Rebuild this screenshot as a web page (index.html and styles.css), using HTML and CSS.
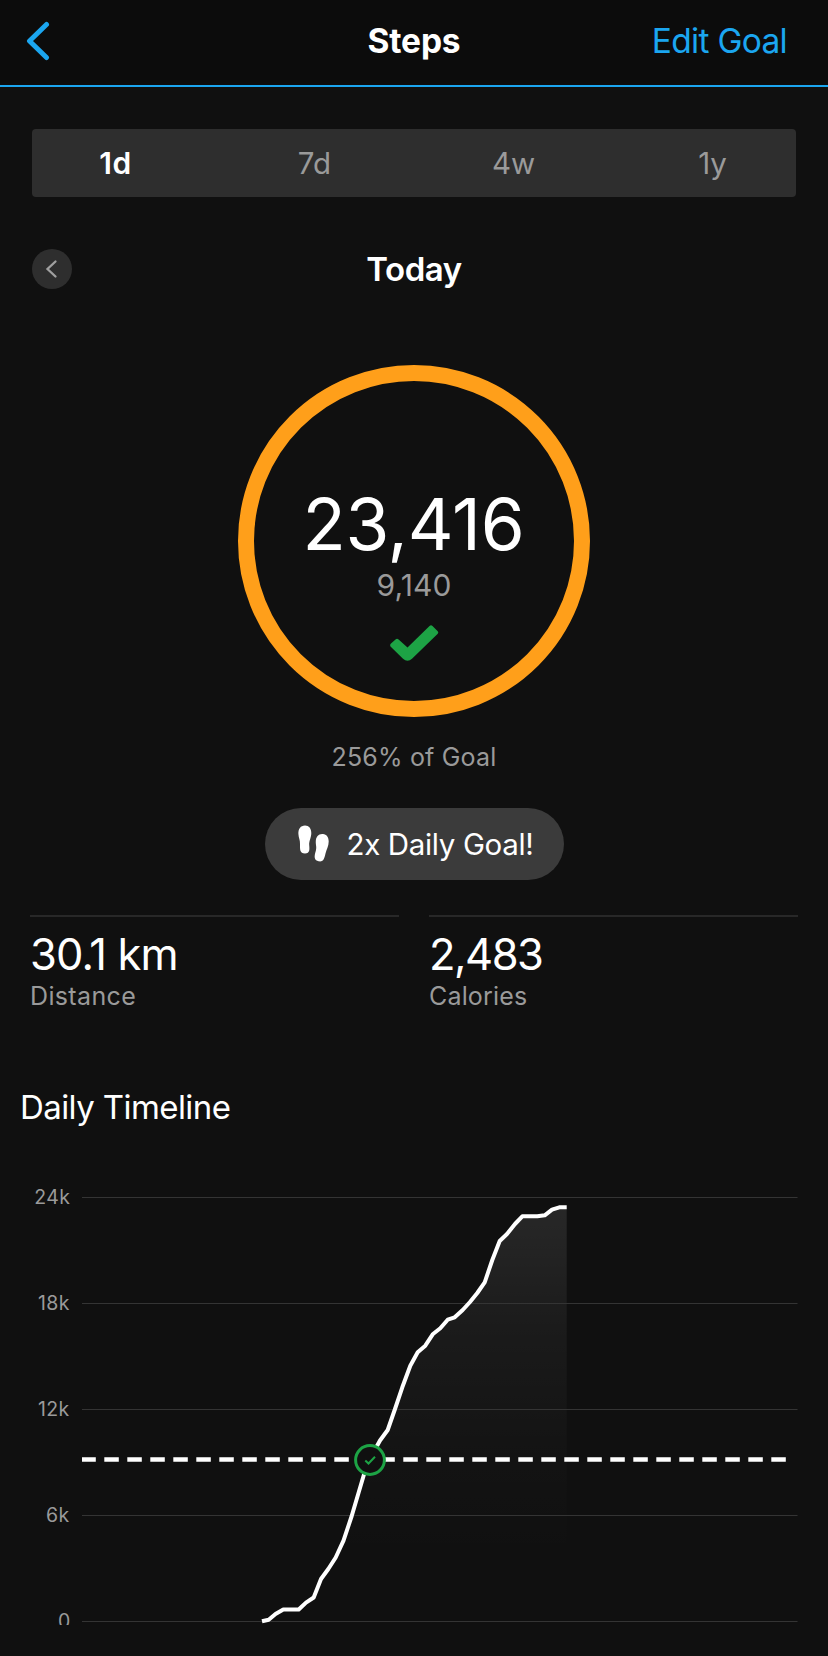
FILE: index.html
```html
<!DOCTYPE html>
<html lang="en">
<head>
<meta charset="utf-8">
<title>Steps</title>
<link rel="stylesheet" href="styles.css">
</head>
<body>
<header class="nav">
  <svg class="back" width="28" height="40" viewBox="0 0 28 40"><path d="M22.500 3.500 5.500 20 22.500 36.500"/></svg>
  <h1 class="nav-title">Steps</h1>
  <a class="edit">Edit Goal</a>
</header>
<main>
  <nav class="tabs">
    <div class="tab-row">
      <span class="tab active">1d</span><span class="tab">7d</span><span class="tab">4w</span><span class="tab">1y</span>
    </div>
  </nav>
  <div class="day">
    <span class="prev"><svg width="40" height="40" viewBox="0 0 40 40"><path d="M23.500 12.500 15.500 20 23.500 27.500"/></svg></span>
    <h2 class="today">Today</h2>
    <span></span>
  </div>
  <section class="ring">
    <div class="count">23,416</div>
    <div class="goal">9,140</div>
    <svg class="check" width="49" height="36" viewBox="0 0 49 36"><path d="M1 18.500 5.500 14.500Q7 13 8.600 14.500L17.500 22.500 39.500 1Q41 -.4 42.500 1L47.500 6Q49 7.500 47.500 9L22 33.800Q17.500 37.500 13 33.800L1 22Q-.7 20.200 1 18.500Z"/></svg>
  </section>
  <p class="percent">256% of Goal</p>
  <div class="badge">
    <svg class="feet" width="32" height="38" viewBox="0 0 32 38">
      <path d="M7 .5C2.500.5.2 4 .4 9C.6 13 2.200 15 2 19C2 24 1.600 28.500 7 28.500C12.200 28.500 11.500 24 11.200 20C11 15.500 13.300 13 13.300 8C13.300 3.500 11 .5 7 .5Z"/>
      <path d="M25 9C20.500 8.500 18 12 17.800 16C17.600 20 18.800 21.500 18 25C17.200 28.500 14.400 34.800 20.500 36.300C26 37.300 26.500 32.500 27.500 28.500C28.500 24.500 30.700 21 30.700 16.500C30.700 12 28.500 9.300 25 9Z"/>
    </svg>
    <span class="badge-text">2x Daily Goal!</span>
  </div>
  <section class="stats">
    <div class="stat"><div class="value km">30.1 km</div><div class="label dist">Distance</div></div>
    <div class="stat"><div class="value cal">2,483</div><div class="label">Calories</div></div>
  </section>
  <h3 class="heading">Daily Timeline</h3>
  <svg class="chart" width="828" height="455" viewBox="0 1170 828 455">
    <defs>
      <linearGradient id="fade" gradientUnits="userSpaceOnUse" x1="0" y1="1207" x2="0" y2="1621">
        <stop offset="0" stop-color="#fff" stop-opacity=".1"/>
        <stop offset=".3" stop-color="#fff" stop-opacity=".045"/>
        <stop offset=".6" stop-color="#fff" stop-opacity=".014"/>
        <stop offset=".85" stop-color="#fff" stop-opacity="0"/>
      </linearGradient>
    </defs>
    <path class="area" d="M262 1621.300 268.700 1619.700 275.500 1614 283.300 1609.500H298.700L306 1602.600 313.700 1597.500 321 1579 328.300 1569 335.700 1557.500 343.500 1540.700 351.700 1516 358.500 1493 365 1471 372 1455 380 1440.500 387.700 1430 395 1409 402.300 1387.300 410.300 1365.700 417.700 1352.300 425.300 1345.700 432.700 1334.300 440.300 1328.300 447.700 1319.700 454.700 1317.300 462.700 1310 470 1302 477.300 1293 484.700 1282.300 492.300 1260 499.700 1241 507 1234 515 1224 522.300 1216.300H537.300L544.700 1215.300 552 1209.700 559.300 1207.300H566.700V1621.300Z"/>
    <path class="grid" d="M82 1197.500H797.500M82 1303.500H797.500M82 1409.500H797.500M82 1515.500H797.500M82 1621.500H797.500"/>
    <path class="target" d="M82 1459.500H787"/>
    <path class="line" d="M262 1621.300 268.700 1619.700 275.500 1614 283.300 1609.500H298.700L306 1602.600 313.700 1597.500 321 1579 328.300 1569 335.700 1557.500 343.500 1540.700 351.700 1516 358.500 1493 365 1471 372 1455 380 1440.500 387.700 1430 395 1409 402.300 1387.300 410.300 1365.700 417.700 1352.300 425.300 1345.700 432.700 1334.300 440.300 1328.300 447.700 1319.700 454.700 1317.300 462.700 1310 470 1302 477.300 1293 484.700 1282.300 492.300 1260 499.700 1241 507 1234 515 1224 522.300 1216.300H537.300L544.700 1215.300 552 1209.700 559.300 1207.300H566.700"/>
    <circle class="marker" cx="370" cy="1460" r="14.400"/>
    <path class="tick" d="M365.300 1460.500 368.500 1463.500 375 1456.800"/>
    <g class="axis">
      <text x="34.300" y="1204">24k</text>
      <text x="38" y="1310">18k</text>
      <text x="38" y="1416">12k</text>
      <text x="46" y="1522">6k</text>
      <text x="58" y="1628">0</text>
    </g>
  </svg>
</main>
</body>
</html>
```
FILE: styles.css
```css
* { box-sizing: border-box; margin: 0; padding: 0; }
body { background: #101010; color: #fff; font-family: Inter, "Liberation Sans", sans-serif; width: 828px; height: 1656px; overflow: hidden; }
h1, h2, h3 { font-weight: 600; }
.nav { height: 87px; background: #0c0c0c; border-bottom: 2px solid #1ba6f0; display: grid; grid-template-columns: 1fr auto 1fr; align-items: center; padding: 0 41px 3px 24px; }
.back { fill: none; stroke: #1ba6f0; stroke-width: 5; stroke-linecap: round; stroke-linejoin: round; }
.nav-title { font-size: 33.5px; font-weight: 700; line-height: 40px; padding-left: 17px; letter-spacing: -.15px; }
.edit { justify-self: end; color: #1ba6f0; font-size: 33.5px; line-height: 40px; letter-spacing: -.7px; }
.tabs { margin: 42px 32px 0; height: 68px; background: #2e2e2e; border-radius: 4px; }
.tab-row { margin: 0 -16px; display: grid; grid-template-columns: repeat(4, 199px); }
.tab { text-align: center; line-height: 69px; font-size: 29.5px; color: #9a9a9a; }
.tab.active { color: #fff; font-weight: 600; font-size: 30px; letter-spacing: .5px; }
.day { margin: 52px 32px 0; height: 40px; display: grid; grid-template-columns: 1fr auto 1fr; }
.prev { width: 40px; height: 40px; border-radius: 50%; background: #2e2e2e; }
.prev svg { display: block; fill: none; stroke: #a0a0a0; stroke-width: 2.3; stroke-linecap: round; }
.today { font-size: 33px; line-height: 40px; letter-spacing: -.4px; }
.ring { margin: 76px auto 0; width: 352px; height: 352px; border: 16px solid #ff9f1a; border-radius: 50%; display: flex; flex-direction: column; align-items: center; padding-top: 103px; }
.count { font-size: 71px; line-height: 80px; letter-spacing: -.2px; padding-right: 1px; }
.goal { font-size: 30px; line-height: 40px; color: #9a9a9a; margin-top: 1px; letter-spacing: .1px; }
.check { margin-top: 20px; fill: #1da345; }
.percent { margin-top: 25px; text-align: center; font-size: 25px; line-height: 30px; color: #9a9a9a; letter-spacing: .17px; }
.badge { margin: 36px auto 0; width: 299px; height: 72px; border-radius: 36px; background: #3b3b3b; display: flex; align-items: center; padding-left: 33px; gap: 17px; }
.feet { fill: #fff; }
.badge-text { font-size: 29.5px; line-height: 40px; white-space: nowrap; letter-spacing: -.35px; }
.stats { margin: 35px 30px 0; display: grid; grid-template-columns: 369px 369px; gap: 30px; }
.stat { border-top: 2px solid #282828; padding-top: 12px; }
.value { font-size: 43.5px; line-height: 50px; white-space: nowrap; }
.km { letter-spacing: -.9px; }
.cal { letter-spacing: -1.5px; }
.label { font-size: 25px; line-height: 34px; color: #9a9a9a; letter-spacing: .17px; }
.dist { letter-spacing: .35px; }
.heading { font-weight: 400; font-size: 33px; line-height: 40px; margin: 74px 0 0 20px; letter-spacing: -.58px; }
.chart { display: block; margin-top: 43px; }
.area { fill: url(#fade); }
.grid { stroke: #343434; stroke-width: 1; }
.target { stroke: #fff; stroke-width: 4.4; stroke-dasharray: 14.500 8.500; stroke-dashoffset: .7; }
.line { fill: none; stroke: #fff; stroke-width: 4; stroke-linejoin: round; }
.marker { fill: #101010; stroke: #1da345; stroke-width: 3; }
.tick { fill: none; stroke: #1da345; stroke-width: 2; }
.axis { fill: #9a9a9a; font-size: 19.5px; letter-spacing: .4px; }
```
